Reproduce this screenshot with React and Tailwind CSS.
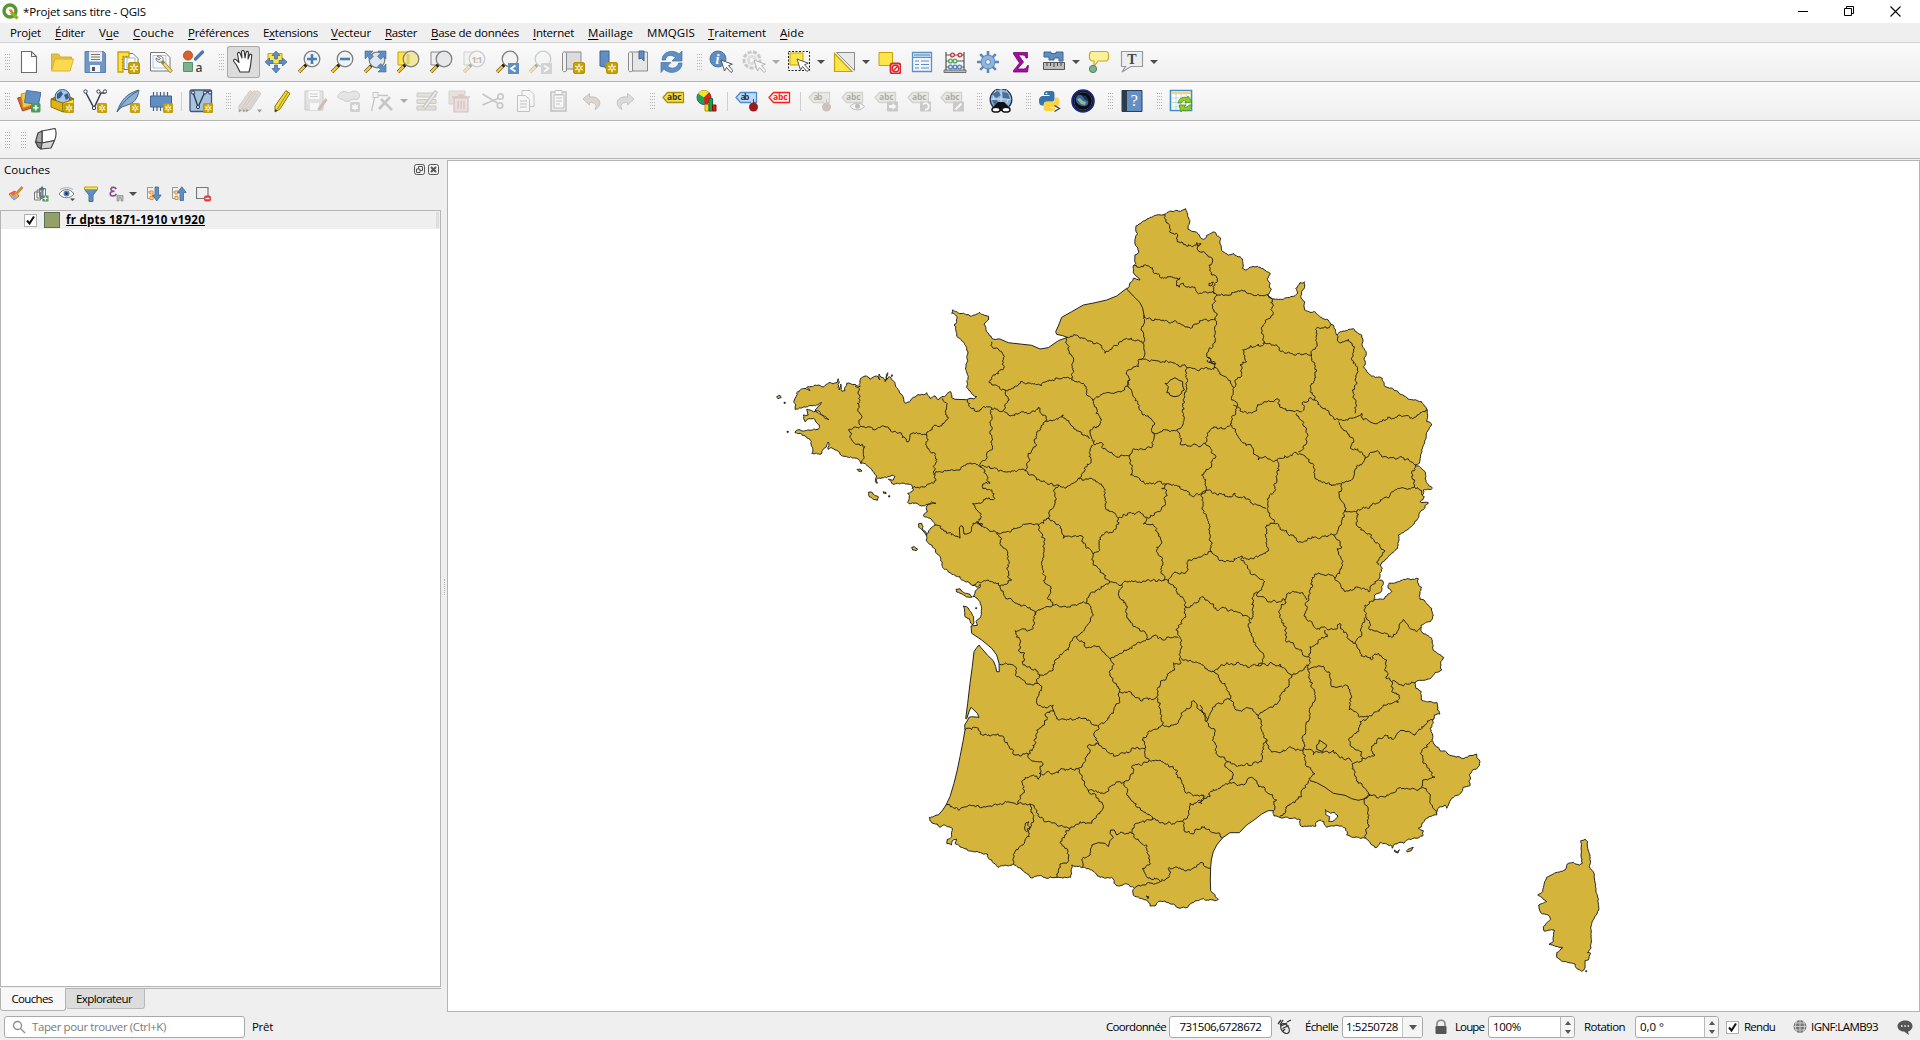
import React, { useLayoutEffect, useRef } from "react";

/* ---------- text fitted to a column width ---------- */
function T({ w, className = "", children }) {
  const ref = useRef(null);
  useLayoutEffect(() => {
    const el = ref.current;
    el.style.letterSpacing = "0px";
    const natural = el.getBoundingClientRect().width;
    el.style.letterSpacing = (w - natural) / el.textContent.length + "px";
  }, [w]);
  return <span ref={ref} className={"inline-block shrink-0 whitespace-nowrap " + className}>{children}</span>;
}

/* ---------- map geometry ---------- */
/* Each letter opens a survey sheet; points are in thirds of a pixel from the sheet's corner.
   A lower-case letter marks a smooth stretch. */
const SHEETS = { A: [760, 350], B: [920, 200], C: [1180, 200], D: [900, 500], E: [1200, 500], F: [1100, 800] };

function parse(src) {
  let sheet = SHEETS.A, smooth = false;
  const pts = [];
  for (const tok of src.trim().split(/\s+/)) {
    if (/^[A-Fa-f]$/.test(tok)) {
      sheet = SHEETS[tok.toUpperCase()];
      smooth = tok !== tok.toUpperCase();
      continue;
    }
    const [x, y] = tok.split(",").map(Number);
    pts.push([sheet[0] + x / 3, sheet[1] + y / 3, smooth]);
  }
  return pts;
}

function roughen(src, amp, closed) {
  const pts = parse(src);
  if (closed) pts.push(pts[0]);
  const out = [pts[0]];
  const noise = (a, b) => {
    const s = Math.sin(a * 12.9898 + b * 78.233) * 43758.5453;
    return (s - Math.floor(s)) * 2 - 1;
  };
  const split = (p, q, level) => {
    const dx = q[0] - p[0], dy = q[1] - p[1], len = Math.hypot(dx, dy);
    if (len < 2.2 || level === 0) { out.push(q); return; }
    const n = noise(p[0] + q[0], p[1] + q[1]) * amp;
    const k = Math.min(1, 5 / len);
    const m = [(p[0] + q[0]) / 2 - dy * n * k, (p[1] + q[1]) / 2 + dx * n * k];
    split(p, m, level - 1);
    split(m, q, level - 1);
  };
  for (let i = 1; i < pts.length; i++) {
    if (pts[i][2]) out.push(pts[i]);
    else split(pts[i - 1], pts[i], 5);
  }
  return "M" + out.map((p) => p[0].toFixed(1) + " " + p[1].toFixed(1)).join("L") + (closed ? "Z" : "");
}

const MAINLAND = `B 660,240 643,222 640,205 647,190 645,165 656,158 650,140 645,118 652,100 648,78 665,66 690,52 730,44 745,36 775,33 797,26
C 17,26 27,58 24,88 45,95 60,110 70,118 80,106 105,97 122,118 128,155 145,166 160,160 180,170 188,185 187,205 195,210 207,203 240,202 258,212 271,222 262,235 270,250 268,262 274,268 262,285 273,294 310,298 345,287 353,280 347,265 360,248 374,245 374,258 365,275 362,290 374,305 374,330 400,335 425,352 440,358 452,373 460,375 467,390 470,405 485,395 520,386 545,405 547,430 558,455 552,478 556,490 550,500 565,520 580,528 607,535 615,560 650,572 680,592 700,600 725,605 740,627 742,640 740,665 755,672 738,715 725,750 718,790 706,795 735,815 738,845 757,865 730,870 727,885 733,890 720,905 745,908 728,930 710,960
E 632,80 595,105 593,145 565,170 540,195 547,205 535,238 550,247 545,272 524,285 522,300 552,297 562,285 575,275 565,265 567,250 580,250 610,238 655,236 653,248 665,262 660,298 672,300 695,325 700,345 690,365 664,375 663,385 672,402 695,415 698,445 715,462 731,472 722,490 725,510 705,518 685,537 650,543 645,550 648,565 664,575 664,600 690,605 710,607 712,630 720,642 703,645 703,655 698,660 690,685 698,705 695,720 705,735 720,752 740,757 785,775 830,762 832,775 840,785 832,805 815,815 807,845 810,857 790,862 782,880 755,895 745,915 740,925 735,915 722,920 712,930 710,945 680,955 665,980 655,985 670,992 668,1008 620,1020 612,1030 600,1027 580,1035 577,1045 572,1035 540,1028 525,1043 510,1028 497,1015 440,1005 437,985 425,978 380,982 372,965 360,960 350,965 348,978 310,980 300,975 300,958 240,952 222,948 220,932
e 205,932 185,942 165,958 140,975 118,998 90,998 68,1013 50,1035 40,1055 34,1080 32,1100 31,1140 32,1172
F 340,280 355,298 343,302 310,295 285,303 267,315 263,322 240,325 220,312 195,303 175,305 165,318 150,318 140,300 100,285 98,275 103,265 80,252 52,257 35,232 0,232
D 575,1110 545,1103 515,1095 512,1132 475,1132 450,1130 445,1135 425,1127 390,1132 370,1112 340,1092 325,1098 315,1095 297,1102 265,1075 262,1062 220,1055 165,1030 170,1018 160,1020 155,1035 140,1030 142,1018 155,1010 157,985 130,975 120,982 112,972 95,968 88,952 115,945
d 128,930 138,915 150,890 162,850 172,810 180,770 190,720 195,690 194,675 203,660 207,652 215,650 237,652 232,640 213,622 207,635 200,656 197,656 203,610 210,550 217,500 222,455 229,445 237,435 242,442 262,465 280,482 287,500 290,515 298,515 297,490 290,465 275,445 245,420 215,400 213,378 232,376
D 228,365 242,350 245,325 240,305 232,295 218,290 225,280 240,262 240,253 230,262 215,255 205,245 185,240 180,230 150,218 128,203 122,175 95,135 78,120 78,105 105,75
A 515,510 490,497 502,485 500,468 528,460 515,455 485,468 462,460 443,457 448,445 443,430 460,420 455,405 440,402 425,400 400,403 385,388 400,390 405,380 395,375 380,383 352,385 352,400 346,395 350,378 340,365 320,345 302,340 290,325 265,322 240,312 225,300 212,293 204,298 204,276 198,292 190,298 183,312 155,310 158,295 150,268 135,258 105,248 107,243 160,238 175,238 178,225 160,205 142,208 135,215 130,195 145,195 140,178 160,185 172,186 185,195 207,209 180,186 165,181 185,158 160,167 105,178 103,150 110,128 135,115 150,122 140,112 175,105 185,110 215,100 232,97 235,86 238,120 242,102 246,124 255,122 260,100 285,103 300,110 302,85 315,78 330,88 350,78 360,90 358,72 376,92 383,68 375,95 388,80 405,100 420,130 438,160 460,142 480,135 500,128 510,145 525,138 535,150 545,140 572,125 575,143
a 585,148 620,149 630,145
A 642,147 650,140 640,135 620,112 625,80 618,50 620,0
B 128,425 110,405 102,375 110,365 107,345 95,340 97,330 150,348 180,338 205,348 205,360 192,372 200,395 215,415 240,417
b 265,428 300,432 335,436 360,447 385,443 415,422 442,412 428,407 410,403 407,395 415,378 425,352 455,335 490,315 525,308 560,300 590,288 620,265
B 635,245 640,235`;

const CORSICA = `F 1442,122 1455,118 1463,125 1463,145 1470,165 1468,200 1482,220 1488,265 1495,295 1496,330 1475,370 1473,430 1473,445 1462,458 1472,460 1465,480 1455,482 1455,505 1445,514 1430,505 1425,492 1390,485 1370,472 1370,458 1388,443 1347,433 1360,425 1363,390 1332,393 1330,380 1352,358 1345,345 1322,338 1316,315 1340,305 1325,292 1313,285 1328,275 1333,250 1340,232 1360,222 1395,210 1402,192 1420,187 1438,195 1447,190 1443,165`;

const ISLANDS = [
  "A 50,140 60,136 64,142 54,146", "A 291,358 300,357 306,363 297,364", "A 325,427 335,426 345,437 355,440 352,451 340,448 328,440",
  "A 72,157 76,157 76,160 72,160", "A 81,244 85,244 85,247 81,247", "A 370,425 378,427 378,431 371,430", "A 386,437 389,437 389,441 386,441",
  "A 475,522 485,520 489,530 487,537 497,545 501,556 492,545 482,536 476,532", "A 455,592 463,590 473,598 468,602 458,600",
  "A 588,718 600,716 605,724 630,733 635,742 620,741 600,730 590,726", "A 610,768 620,770 632,785 641,800 641,822 636,824 628,806 615,800",
  "A 647,773 650,773 650,776 647,776", "A 395,74 398,76 395,80", "E 583,1050 592,1056 598,1049 594,1059 584,1055", "E 620,1052 640,1042 634,1052 622,1056",
  "F 1457,512 1460,512 1460,515 1457,515",
];

const LAGOONS = ["E 376,929 392,940 403,937 414,948 398,964 386,964 389,950 377,944"];

const BORDERS = [
  "B 730,44 748,95 770,100 768,115 790,133 835,137 843,130 830,128 832,145 862,165 878,182 868,195 872,215 890,230 885,280",
  "B 640,197 670,200 690,202 730,235 780,233 770,248 778,262 790,250 825,262 830,275 885,280",
  "B 885,280 892,285 C 115,285 155,278 195,272 235,282 273,294", "b 620,267 640,288 660,308 668,325 672,345", "B 672,345 685,355 740,362 770,365 812,385 850,360 885,357",
  "B 892,285 878,320 885,357 885,420 865,455 865,475 885,495 885,502", "B 864,472 872,478 868,486 882,484 888,492 874,490 862,480",
  "B 672,345 665,380 668,430 675,462 660,478", "B 660,478 690,485 740,482 800,502 840,510 885,502",
  "B 442,412 470,405 500,420 535,430 555,460 575,448 600,425 620,415 668,430", "B 442,412 445,450 458,490 455,540",
  "B 215,425 220,445 250,465 253,500 225,525 208,548 255,570", "B 255,570 310,548 365,558 405,535 455,533",
  "B 455,540 490,550 518,600 530,590 585,578 608,572 630,540 620,515 655,500 660,478", "B 255,570 268,600 250,632",
  "B 143,600 150,622 168,635 190,620 215,628 250,632", "B 250,632 265,645 310,635 345,635 355,622 378,655 380,665 430,645 450,670 480,695 510,715",
  "B 518,600 528,640 540,655 535,680 510,690 515,715 525,735", "B 215,628 215,690 215,750 200,760 180,800",
  "B 378,660 360,685 345,730 325,760 330,780 315,812", "B 180,800 230,805 265,815 315,812", "B 315,812 345,830 380,850 415,855 440,860 475,835",
  "B 520,735 510,790 475,835", "B 525,735 550,732 545,742 555,745 595,772 630,765", "B 630,540 640,590 665,635 700,665 700,700 690,742 650,748 630,765",
  "B 800,502 798,560 788,620 788,675 770,690", "B 700,697 740,690 770,690 785,735 830,735 855,730",
  "b 735,550 742,551 750,541 765,533 776,540 788,545 788,558 793,570 785,574 785,580 775,588 762,590 750,586 747,578 740,578 743,570 745,560 735,550",
  "B 885,502 940,562 935,590 950,620 935,650 932,675",
  "B 855,730 875,685 932,675", "B 630,765 632,825 660,840 680,850 740,852", "B 740,852 790,870 815,888 850,880", "B 855,730 885,765 875,795 845,825 857,872 850,880",
  "B 475,835 520,840 550,860 555,920 595,955 650,938 685,955 720,935 735,900 740,870 725,865 740,852",
  "A 660,350 690,400 668,402 668,415 695,420 705,445 638,460 662,490 655,515", "A 895,405 885,460 865,505", "A 520,373 600,360 630,338 658,350",
  "A 500,255 505,270 497,285 525,310 530,335 520,350 520,400 485,410 455,415", "A 285,108 300,140 292,160 300,225", "A 300,228 345,240 375,230 425,255 440,275 460,248 500,255",
  "A 300,230 265,240 275,270 315,290 310,310 302,340", "A 545,145 560,170 552,220 520,230 500,255", "A 525,525 560,550 600,565 a 598,532 603,527 609,530 612,552 620,552 630,548 A 635,530 650,515 680,535 710,548",
  "A 650,515 668,522 665,530 652,518", "A 710,548 770,535 790,523 835,527 860,505", "A 710,548 740,600 748,640 742,680 755,690 720,708", "A 640,705 690,695 720,708",
  "A 720,708 735,740 800,770 828,795", "A 835,527 855,570 850,610 845,640 855,700 875,715 862,745 878,765", "D 440,57 485,90 490,115 540,105 550,130 580,163",
  "D 580,163 595,155 605,105 640,95 657,68 655,55", "D 740,55 730,72 765,80 785,125 770,150 785,180 790,243", "D 580,163 580,195 610,220 628,248",
  "D 458,315 500,322 520,315 560,310", "D 560,310 570,285 628,250", "D 628,248 665,255 680,245 740,240 805,243", "D 665,255 658,290 670,300 682,355 700,380 735,395 740,418",
  "D 560,310 580,345 555,385 530,410", "D 458,315 420,330 405,345 400,385 345,392 360,430 355,450 375,460 370,495 400,510 420,525",
  "D 530,410 510,430 505,450 465,480 460,510 440,522 420,525", "D 298,492 345,500 350,530 390,552 410,550 420,525", "D 410,550 425,565 410,608 425,620 460,615 462,635",
  "D 462,635 435,645 440,660 410,690 400,745 385,765", "D 195,690 235,685 240,702 300,708 340,750 345,765 385,762", "D 385,762 388,775 428,790 418,820",
  "D 462,635 475,660 530,655 555,655 595,680", "D 595,680 640,640 658,600 658,577", "D 530,410 555,440 590,440 632,475", "D 632,475 665,460 740,418",
  "D 632,475 640,490 628,515 655,560 658,577", "D 658,577 690,575 720,600 770,592", "D 740,418 765,405 790,420 835,412", "D 805,243 850,295 858,320 858,350 828,388 840,412",
  "D 840,412 843,470 840,492 820,488", "D 820,488 815,515 790,540 775,585 770,592 782,630 788,675", "D 843,475 870,480 900,490 935,515 E 35,515",
  "D 788,675 730,712 735,745", "D 788,675 835,668 860,625 882,602 920,665", "D 595,732 640,768 680,755 735,745",
  "D 595,680 585,695 597,732", "D 597,732 565,735 570,755 550,790 535,805", "D 418,820 450,818 510,805 535,805", "D 535,805 545,825 558,862 565,872",
  "D 565,872 620,875 640,855 672,845", "D 672,845 700,815 695,800 745,785", "D 735,745 735,770 745,785", "D 745,785 780,780 820,800 845,840 860,880 880,888 915,890",
  "D 672,845 700,905 755,960", "D 915,895 930,890 940,868 E 40,868 90,848", "D 915,895 870,910 862,955 848,965", "D 755,960 790,968 848,965",
  "D 848,965 852,990 880,1002 905,980 960,1005 E 68,1013", "D 418,820 415,838 400,825 370,840 368,880 355,912", "D 565,872 610,920 575,970 540,965 510,985",
  "D 390,912 430,960 470,975 510,985", "D 138,915 180,928 200,920 270,918 355,912 390,912", "D 390,912 402,960 388,1010 340,1075 340,1092", "D 378,968 386,965 390,985 380,995 374,985 378,968",
  "D 510,985 480,1028 507,1065 500,1090 480,1092 475,1132", "D 545,1100 545,1080 570,1060 575,1035 d 595,1028 615,1030 625,1040 630,1022 640,1012 630,1000 632,990 643,990 650,1005 D 668,998 695,1000",
  "D 695,1000 710,970 755,960", "D 695,1000 720,1025 740,1035 748,1095 728,1105 740,1130 780,1143", "D 703,1165 740,1150 780,1145 808,1130 808,1102 880,1105 900,1088 932,1102",
  "D 738,1188 746,1190 744,1196 738,1188", "B 874,248 880,246 876,256 866,256 874,248",
  "C 65,880 70,905 C 70,930 90,980 95,1055", "D 805,243 830,218 858,215 865,180 935,155", "D 935,155 E 60,182 100,185 125,168", "D 858,320 905,290 915,300 E 15,300 50,330 110,335 150,355",
  "E 125,168 150,215 188,238 185,270 160,290 160,350 150,355", "E 125,168 155,175 200,155 200,125 200,75 222,70", "C 65,880 85,870 115,885 150,890 165,880 210,905 258,925",
  "C 262,925 270,940 E 222,68", "C 292,785 298,810 285,850 265,905 262,925", "C 155,675 185,725 215,740 235,780 292,782", "C 160,615 190,637 215,640 230,622 255,605 295,597 300,622 320,633 345,635 365,635",
  "C 350,640 380,685 380,730 355,755", "C 292,782 340,760 370,765", "C 370,765 400,800 405,835 455,858 485,850", "C 395,465 405,525 390,575 403,600 370,605 368,632",
  "C 160,562 185,520 180,495 200,485 188,450 235,432 248,437", "C 248,437 250,375 278,345 273,294", "C 248,430 270,430 310,455 395,465", "C 395,465 412,435 412,382 440,385 452,375",
  "C 470,405 475,425 505,418 520,450 520,490 532,510 520,580 525,640", "C 403,600 440,630 475,660", "C 475,660 545,640 550,660 580,670 620,658 660,645 690,655 742,630",
  "C 475,665 520,715 512,740 555,775", "C 555,775 585,755 625,775 665,770 706,795", "C 555,775 525,810 520,835 485,845", "C 706,795 695,820 703,862",
  "C 703,862 640,875 590,910 530,937 495,930", "C 485,850 478,885 495,930 E 425,70 400,105", "C 703,862 720,870 727,885", "E 222,70 250,90 300,125 400,105",
  "E 470,38 482,90 515,105 552,150 535,195", "E 400,105 425,140 412,145 425,190 420,220 405,235", "E 405,235 435,275 465,262 505,275 535,240", "E 405,235 385,222 345,222",
  "E 345,222 330,270 320,305", "E 175,275 175,290 200,300 255,300 265,278 300,280 320,300", "E 255,300 238,340 252,370 258,425 305,450 308,465 325,470",
  "E 320,305 318,355 350,388 380,385", "E 375,390 382,410 330,440 325,470", "E 380,388 400,390 420,370 465,430", "E 465,430 485,400 498,350 495,315 522,300",
  "E 500,352 510,390 545,400 575,412 590,400 610,358 625,375 650,395 663,382", "E 465,430 490,470 515,480 525,462 560,480 558,530 575,545", "E 575,545 610,558 645,548",
  "E 575,545 575,575 597,590 595,607 550,615 505,650", "E 325,510 365,500 390,520 395,560 445,562 447,630 505,650", "E 150,355 145,380 160,420 190,460 188,485 175,497",
  "E 35,515 80,488 130,497 175,497", "E 175,497 240,492 258,510 275,525", "E 275,525 325,497 325,470", "E 325,497 345,600 330,640 318,690 310,750", "E 275,525 240,600 175,645",
  "E 35,515 75,550 88,597", "D 920,665 E 30,640 50,612 88,597", "E 0,615 15,640 20,665", "E 88,597 108,630 150,625 175,645", "E 175,645 195,715", "E 22,668 45,690 48,760 85,785",
  "E 85,785 130,797 185,785 190,730 200,718", "E 195,715 208,748 245,755 265,743 310,750", "E 85,785 75,800 100,825 90,848 120,855 155,832 170,850",
  "E 170,850 230,900 220,932", "D 905,885 912,895 905,912 895,908", "E 310,750 325,800 345,822 310,865 305,890 275,910 240,950", "e 330,842 350,848 375,862 400,880 435,886 455,896 475,901 495,896 510,885",
  "E 310,745 335,750 340,765 400,750 455,785", "e 350,735 357,730 358,720 380,735 378,742 370,748 368,755 350,748 350,735", "E 505,650 480,665 475,695 447,715 450,735 485,755 487,780 457,790",
  "E 487,775 525,765 515,745 530,730 555,705 580,718 600,692 645,705 665,680 703,655", "E 457,790 475,850 510,885", "E 510,885 550,890 590,868 620,865 668,862",
  "E 695,722 665,755 670,790 705,832 668,840 662,862", "E 668,862 690,895 705,930 710,940", "E 510,885 492,900 507,975 497,1015",
];

const LAND_PATH = roughen(MAINLAND, 0.2, true);
const CORSICA_PATH = roughen(CORSICA, 0.12, true);
const ISLAND_PATH = ISLANDS.map((d) => roughen(d, 0.1, true)).join("");
const LAGOON_PATH = LAGOONS.map((d) => roughen(d, 0.1, true)).join("");
const BORDER_PATH = BORDERS.map((d) => roughen(d, 0.36, false)).join("");

function FranceMap() {
  return (
    <svg className="block" width="1471" height="850" viewBox="448 161 1471 850" strokeLinejoin="round" stroke="#232323" strokeWidth="1">
      <g fill="#d5b43c">
        <path d={LAND_PATH} />
        <path d={CORSICA_PATH} />
        <path d={ISLAND_PATH} />
      </g>
      <path d={LAGOON_PATH} fill="#fff" />
      <path d={BORDER_PATH} fill="none" />
    </svg>
  );
}

/* ---------- icon pieces ---------- */
const Star = ({ x = 12, y = 12, s = 1 }) => (
  <g transform={`translate(${x} ${y}) scale(${s})`}>
    <rect x="0.5" y="0.5" width="11" height="11" rx="1.5" fill="#c9a100" stroke="#b99300" />
    <path d="M6 1.800v8.400M2.300 4l7.400 4M9.700 4L2.300 8" stroke="#fff" strokeWidth="1.300" />
    <circle cx="6" cy="6" r="1.100" fill="#c9a100" />
  </g>
);
const Plus = ({ x = 14, y = 14 }) => (
  <g transform={`translate(${x} ${y})`}>
    <rect x="0" y="0" width="9.500" height="9.500" rx="1.500" fill="#4c9a61" />
    <path d="M4.750 2v5.500M2 4.750h5.500" stroke="#fff" strokeWidth="1.700" />
  </g>
);
const Mag = ({ fill = "#f2f4f4", cx = 15, cy = 9, children }) => (
  <g>
    <path d="M9.500 14.500L2 22" stroke="#6b5a20" strokeWidth="3.400" />
    <path d="M8 16L2 22" stroke="#fcc63a" strokeWidth="2.200" />
    <path d="M7.500 16.500l3-3" stroke="#222" strokeWidth="3" />
    <circle cx={cx} cy={cy} r="7.800" fill={fill} stroke="#7d7f80" strokeWidth="1.300" />
    {children}
  </g>
);
const Cursor = ({ x = 12, y = 10 }) => (
  <path transform={`translate(${x} ${y})`} d="M0 0l3.500 11 2-3.500 4.500 5 2-1.800-4.500-5 3.800-1.500z" fill="#fff" stroke="#555" strokeWidth="1" />
);
const Tag = ({ fill, stroke, text, color = "#333" }) => (
  <g>
    <path d="M1 8.500L5.500 3.500H21.500V13.500H5.500z" fill={fill} stroke={stroke} strokeWidth="1.300" strokeLinejoin="round" />
    <text x={text === "ab" ? 5.5 : 5} y="11.200" fontSize="8.500" fontWeight="700" fill={color} fontFamily="Open Sans" textLength={text === "ab" ? 9 : 14.5}>{text}</text>
  </g>
);
const Pin = ({ c = "#9c1c1c" }) => (
  <g><path d="M17.500 8v9" stroke="#c8d4e0" strokeWidth="3" /><path d="M18.500 10v7" stroke={c} strokeWidth="1" /><circle cx="18.500" cy="18" r="4.500" fill={c} /></g>
);
const Pencil = ({ x = 0, fill = "#f3d83a", dark = "#8a7410" }) => (
  <g transform={`translate(${x} 0)`}><path d="M16 1.500l4 3L10 20l-5 3 0-6z" fill={fill} stroke={dark} /><path d="M18 3L7.500 20" stroke={dark} strokeWidth=".8" /><path d="M5 23l.3-3 2.300 1.600z" fill="#333" /></g>
);
const arrows4 = "M12 1l4 4.500h-2.500V9h-3V5.500H8zM12 23l4-4.500h-2.500V15h-3v3.500H8zM1 12l4.500-4v2.500H9v3H5.500V16zM23 12l-4.500-4v2.500H15v3h3.500V16z";

const ICONS = {
  new: <path d="M4.500 1.500h10l5 5v16h-15zM14.500 1.500v5h5" fill="#fff" stroke="#6b6b6b" strokeWidth="1.100" />,
  open: <g><path d="M1.500 20V4h7l2 3h11v3" fill="#e5bf3e" stroke="#d9ad2b" /><path d="M1.500 21L5 9h18.500l-3.500 12z" fill="#fcd94f" stroke="#dcb236" /></g>,
  save: <g><path d="M2 1.500h18.500l2 2v19H2z" fill="#6d97c4" stroke="#5b7fa8" /><path d="M6 1.500h13v10H6z" fill="#efefef" /><path d="M8 4.500h9M8 7h9M8 9.500h9" stroke="#777" /><path d="M7 15h10v7H7z" fill="#f4f4f4" /><path d="M9 17h3v4H9z" fill="#555" /></g>,
  layout: <g><path d="M8 3.500h9l5 5v11H8z" fill="#fff" stroke="#777" /><path d="M11 8h8v10h-8z" fill="#fff" stroke="#9bb9de" /><path d="M2 2h11v5H7v15H2z" fill="#fbe04e" stroke="#c9a100" strokeWidth="1.300" /><path d="M6.500 9v12M7 6.500h5" stroke="#b08e00" strokeDasharray="1 2" strokeWidth="1.500" /><Star /></g>,
  manager: <g><path d="M1.500 2.500H16l5 5V21H1.500z" fill="#fff" stroke="#777" /><path d="M4 5.500h13V18H4z" fill="#f5f9fd" stroke="#aec6e3" /><path d="M8 6c4-1 7 1 6 5l-2 1c-3 1-5-1-5-4l3 2 1.500-1.500z" fill="#f2f2f2" stroke="#777" /><path d="M13 11.500L22.500 22" stroke="#a28436" strokeWidth="3.600" /><path d="M15 13.500l7 8" stroke="#f4da7a" strokeWidth="2" /></g>,
  style: <g><circle cx="6" cy="5.500" r="4.500" fill="#d9632f" stroke="#b04a1d" /><path d="M13.500 9l7-7" stroke="#4b78a8" strokeWidth="3.200" strokeLinecap="round" /><path d="M1.500 12.500h9v9h-9z" fill="#7db48a" stroke="#5a9069" /><text x="13.500" y="21.500" fontSize="12" fontFamily="Open Sans" fill="#444" fontWeight="600">a</text></g>,
  hand: <path d="M8 22l-3.500-7-3-4c0-2 2-2.300 3-1l2.500 2.500L5.500 4c0-2 2.200-2.200 2.700-.5L10 8 9.500 2c0-2 2.500-2 2.800 0L13 8l1-5.500c.4-1.700 2.500-1.500 2.400.3L16 9l1.500-4c.6-1.400 2.400-.9 2.200.6L18.500 16 17 22z" transform="translate(1 0)" fill="#fff" stroke="#333" strokeWidth="1.100" strokeLinejoin="round" />,
  pan: <g><path d="M4 3.500h14v10H4z" fill="#fbe54b" stroke="#c9a100" /><path d={arrows4} fill="#5f8ec2" stroke="#3d658f" strokeWidth=".7" /></g>,
  zoomin: <Mag><path d="M15 4v10M10 9h10" stroke="#4b7db3" strokeWidth="2.600" /></Mag>,
  zoomout: <Mag><path d="M10 9h10" stroke="#4b7db3" strokeWidth="2.600" /></Mag>,
  full: <Mag cx={14} cy={10} fill="#dfe6ec"><path d="M2 1h8L7.600 3.400 10.500 6.300 7.300 9.500 4.400 6.600 2 9zM23 1h-8l2.400 2.400-2.900 2.900 3.200 3.200 2.900-2.900L23 9zM23 22h-8l2.400-2.400-2.900-2.900 3.200-3.200 2.900 2.900L23 14z" fill="#5f8ec2" stroke="#43689a" strokeWidth=".6" /></Mag>,
  zoomsel: <g><path d="M2 2h11v13H2z" fill="#fbe54b" stroke="#c9a100" /><Mag fill="#f0e7a0"><path d="M12 4v10" stroke="#e0cd60" strokeWidth="3" /></Mag></g>,
  zoomlay: <g><path d="M2 2h11v13H2z" fill="#eee" stroke="#8a8a8a" /><Mag fill="#e6e8e9" /></g>,
  native: <g opacity=".35"><path d="M2 2h11v13H2z" fill="#eee" stroke="#8a8a8a" /><Mag><text x="9.500" y="12.500" fontSize="9" fontWeight="700" fontFamily="Open Sans" fill="#444" textLength="11">1:1</text></Mag></g>,
  last: <g><Mag /><path d="M13 13h11v11H13z" fill="#5f8ec2" /><path d="M20.500 15.500l-4.500 3 4.500 3" stroke="#fff" strokeWidth="1.900" fill="none" /></g>,
  next: <g opacity=".35"><Mag /><path d="M13 13h11v11H13z" fill="#999" /><path d="M16 15.500l4.500 3-4.500 3" stroke="#fff" strokeWidth="1.900" fill="none" /></g>,
  newview: <g><path d="M4.500 2H20v17H4.500z" fill="#dcdcdc" stroke="#8b8b8b" /><path d="M1.500 4c0-3 4-3 4 0v17c-4 2-4-1-4-1z" fill="#f1f1f1" stroke="#8b8b8b" /><Star /></g>,
  bookmark: <g><path d="M6 1h9v20l-4.500-4L6 16z" fill="#5f8ec2" stroke="#3f658f" /><Star /></g>,
  bookmarks: <g><path d="M4.500 2H20.500v19H4.500z" fill="#e6e6e6" stroke="#8b8b8b" /><path d="M1.500 4c0-3 4-3 4 0v17c-4 2-4-1-4-1z" fill="#f1f1f1" stroke="#8b8b8b" /><path d="M12 1h5v10l-2.500-3L12 9z" fill="#5f8ec2" stroke="#3f658f" /></g>,
  refresh: <g fill="#5f8ec2" stroke="#4573a8" strokeWidth=".7"><path d="M2 10C2 1 14-1 19 4l3-3v10H12l3.500-3.500C11 4 6 5 5.500 10z" /><path d="M22 13c0 10-13 12-18 6l-3 3.500V12.500h10L7.500 16c4 4 10 2 11-3z" /></g>,
  identify: <g><circle cx="9" cy="9" r="8" fill="#5f8ec2" stroke="#4876a8" /><text x="6.500" y="14" fontSize="14" fontStyle="italic" fontWeight="700" fontFamily="Liberation Serif" fill="#fff">i</text><Cursor /></g>,
  action: <g opacity=".4"><circle cx="10" cy="10" r="8" fill="#eee" stroke="#888" strokeWidth="3" strokeDasharray="4 1.500" /><circle cx="10" cy="10" r="5" fill="#bbb" /><path d="M8.500 7.500l4.500 2.500-4.500 2.500z" fill="#fff" /><Cursor /></g>,
  select: <g><path d="M1.500 1.500h21v19h-21z" fill="none" stroke="#222" strokeDasharray="2 1.500" /><path d="M3 3h13v12H3z" fill="#fbe54b" stroke="#c9a100" /><Cursor x={10} y={9} /></g>,
  selval: <g><path d="M4.500 2.500h18v18z" fill="#e9e9e9" stroke="#8b8b8b" /><path d="M2.500 3.500L20 21.500H2.500z" fill="#fbe54b" stroke="#c9a100" strokeWidth="1.200" /></g>,
  deselect: <g><path d="M2 2.500h13.500v13H2z" fill="#fbe54b" stroke="#c9a100" /><rect x="13.500" y="13.500" width="10" height="10" rx="2" fill="#fff" stroke="#d8262c" strokeWidth="1.800" /><circle cx="18.500" cy="18.500" r="3.300" fill="#fff" stroke="#d8262c" strokeWidth="1.600" /><path d="M16.500 20.500l4-4" stroke="#d8262c" strokeWidth="1.600" /></g>,
  table: <g><path d="M2.500 2.500h19v19h-19z" fill="#f0f5fb" stroke="#5f8ec2" strokeWidth="1.300" /><path d="M3 3h18v4.500H3z" fill="#bcd6ee" /><path d="M2.500 7.500h19M5 11h4M5 14.500h4M5 18h4M11 11h8M11 14.500h8M11 18h8M4 5h16" stroke="#5f8ec2" strokeWidth="1.200" /></g>,
  abacus: <g fill="none" strokeWidth="1.300"><path d="M3 2v19M21 2v19M1.500 21.500h21M3 5h18M3 11h18M3 17h18" stroke="#555" strokeWidth="1.200" /><path d="M1 20h22v2.500H1z" fill="#bbb" stroke="#555" strokeWidth=".8" /><g fill="#f4d6d6" stroke="#c23b3b"><circle cx="9.500" cy="5" r="1.900" /><circle cx="17" cy="5" r="1.900" /></g><g fill="#d8f0d8" stroke="#55a55c"><circle cx="7.500" cy="11" r="1.900" /><circle cx="12" cy="11" r="1.900" /></g><g fill="#d8e6f5" stroke="#4f81bd"><circle cx="7.500" cy="17" r="1.900" /><circle cx="12" cy="17" r="1.900" /><circle cx="16.500" cy="17" r="1.900" /></g></g>,
  gear: <g><g stroke="#5a86b8" strokeWidth="2.600"><path d="M12 1v22M1 12h22M4.200 4.200l15.600 15.600M19.800 4.200L4.200 19.800" /></g><circle cx="12" cy="12" r="7" fill="#8fb4de" stroke="#5a86b8" strokeWidth="1" /><circle cx="12" cy="12" r="2.400" fill="#f3f3f3" stroke="#5a86b8" /></g>,
  sigma: <path d="M4.500 2.500h14V8H17c-.5-2-1.500-3-3.500-3H9.500l5 7-6 7h6c2 0 3-1 4-3.500H19.500L18.500 22H4.500v-1.500L10.500 13 4.500 4z" fill="#a90aa3" stroke="#6d0a6a" strokeWidth=".8" />,
  measure: <g><path d="M2 2h7v1.500h5V2h7v9h-4V8h-5v2H7V7H2z" fill="#5f8ec2" stroke="#3f658f" /><path d="M1.500 12.500h21v7h-21z" fill="#bdbdbd" stroke="#555" /><path d="M5 13v3M8.500 13v3M12 13v4M15.500 13v3M19 13v3" stroke="#444" /></g>,
  tip: <g><path d="M5 1.500h14c3.500 0 3.500 9.500 0 9.500h-8l-4 5.500V11H5c-3.500 0-3.500-9.500 0-9.500z" fill="#fcf09a" stroke="#c9a735" strokeWidth="1.200" /><circle cx="6" cy="19" r="3.600" fill="#7db48a" stroke="#4f7d5b" /></g>,
  text: <g><path d="M1.500 1.500h21v15H11l-9 5.500 3.500-5.500h-4z" fill="#eaeff2" stroke="#9a9a9a" strokeWidth="1.200" /><text x="7.300" y="13.500" fontSize="14" fontWeight="700" fontFamily="Liberation Serif" fill="#444">T</text></g>,

  dsm: <g><path d="M0.500 9l9-2 5 12-9 3z" fill="#d9632f" stroke="#a94e22" /><path d="M4 5l9-2 2 13-9 3z" fill="#f2cb42" stroke="#c59d1f" /><path d="M9.500 1.500L24 3.500 21.500 15.500 7.500 13.500z" fill="#6390c4" stroke="#47719f" /><Plus /></g>,
  geopkg: <g><path d="M1 10l7-3h10l6 3-11 5z" fill="#a98600" stroke="#8b6d00" /><circle cx="12.500" cy="8" r="7.500" fill="#a8c6e8" stroke="#355c89" /><path d="M7 5l4-3 2 3-3 4-3 1zM14 6l4-2 1 5-3 2z" fill="#355c89" /><path d="M1 10l12 4v9L1 18z" fill="#e1b312" stroke="#8b6d00" /><path d="M13 14L24 10v8l-11 5z" fill="#fbe54b" stroke="#8b6d00" /><Star s={0.85} x={14} y={14} /></g>,
  vlayer: <g><path d="M3 4l8 15 7-15h4" fill="none" stroke="#333f4b" strokeWidth="1.500" /><g fill="#fff" stroke="#333f4b"><circle cx="2.500" cy="2.500" r="1.700" /><circle cx="11" cy="19" r="1.700" /><circle cx="15.500" cy="2.500" r="1.700" /><circle cx="22" cy="2.500" r="1.700" /></g><Star s={0.85} x={14} y={14} /></g>,
  feather: <g><path d="M1 23C5 11 11 4 23 1c-1 7-4 12-9 14l-8 3c-2 1-3 3-5 5z" fill="#8fb0d4" stroke="#43668c" /><path d="M1 23C7 13 13 7 22 2" stroke="#43668c" fill="none" /><Star s={0.85} x={14} y={14} /></g>,
  memory: <g><path d="M4.500 3v19M8 3v19M11.500 3v19M15 3v19M18.500 3v19" stroke="#45607c" strokeWidth="1.200" /><path d="M1.500 7h21v11h-21z" fill="#5f8ec2" stroke="#3f658f" /><Star s={0.85} x={14} y={14} /></g>,
  virtual: <g><rect x="1" y="1" width="21.500" height="21.500" rx="1.500" fill="#a9c3de" stroke="#3c5a7a" strokeWidth="1.300" /><path d="M4 3l5 15 7-15h5" fill="none" stroke="#25394e" strokeWidth="1.300" /><g fill="#dce9f6" stroke="#25394e"><circle cx="4" cy="3.500" r="1.600" /><circle cx="9" cy="18" r="1.600" /><circle cx="16" cy="3.500" r="1.600" /><circle cx="21" cy="3.500" r="1.600" /></g><Star s={0.85} x={14} y={14} /></g>,
  pencils: <g><g opacity=".45"><Pencil x={-4} fill="#c4b6ad" dark="#a69a94" /><Pencil x={0} fill="#c4b6ad" dark="#a69a94" /><Pencil x={3} fill="#c4b6ad" dark="#a69a94" /></g><path d="M19 20.500h5L21.500 23.500z" fill="#999" /></g>,
  pencil: <Pencil x={-1} />,
  saveedit: <g opacity=".32"><path d="M1 2h18v19H1z" fill="#bbb" stroke="#777" /><path d="M4.500 2h11v8h-11zM6 14h9v7H6z" fill="#fff" /><path d="M6 5h8M6 7.500h8" stroke="#777" /><path d="M22.500 10l-8 11" stroke="#8a4a30" strokeWidth="3" /></g>,
  addpoly: <g opacity=".38"><path d="M3 4c4-4 7 1 11-1 6-3 10 2 8 6-2 3-6 0-8 2-5 4-8-1-10-1C-1 9 1 6 3 4z" fill="#c9cbc4" stroke="#888" /><rect x="13" y="13" width="10" height="10" fill="#999" rx="1.500" /><path d="M18 15v6M15 16.500l6 3M21 16.500l-6 3" stroke="#fff" strokeWidth="1.400" /></g>,
  vertex: <g opacity=".36" fill="none" stroke="#777"><path d="M1.500 22L5 6.500h13" strokeWidth="1.300" /><rect x="3" y="3.500" width="5" height="5" fill="#eee" /><path d="M20 8L9 20M11 10l11 11" strokeWidth="2.600" /></g>,
  multi: <g opacity=".38"><path d="M2 4h19v4H2zM2 10.500h19v4H2zM2 17h19v4H2z" fill="#c9c29c" stroke="#888" /><path d="M21.500 2L9 19" stroke="#777" strokeWidth="4" /><path d="M21 3L9.500 18.500" stroke="#ddd" strokeWidth="2" /></g>,
  trash: <g opacity=".34"><path d="M1 2h16v13H1z" fill="#cbbcb4" stroke="#a08c85" /><path d="M6 9h14v14H6z" fill="#dcb4b4" stroke="#a06868" strokeWidth="1.200" /><path d="M4 8h18M10 12v8M13 12v8M16 12v8M10 6h6" stroke="#a06868" strokeWidth="1.300" /></g>,
  cut: <g opacity=".36" fill="none" stroke="#777" strokeWidth="1.600"><path d="M1.500 5l15 9M1.500 16L18 9" /><circle cx="19.500" cy="7.500" r="2.700" /><circle cx="19" cy="16.500" r="2.700" /></g>,
  copy: <g opacity=".42" fill="#fafafa" stroke="#7f7f7f"><path d="M8 1.500h8l4 4v12H8z" /><path d="M3.500 6.500h8l4 4v12h-12z" /><path d="M6 12h7M6 15h7M6 18h7" /></g>,
  paste: <g opacity=".42" fill="#fafafa" stroke="#7f7f7f"><path d="M4 3h15v19H4z" fill="#e4ddda" strokeWidth="1.500" /><path d="M7 6h10v13H7zM8 1.500h7v4H8z" /><path d="M9 9h6M9 12h6M9 15h4" /></g>,
  undo: <path d="M3 10L9.500 4.500v3.500C21 6.500 23 17 15 20.500c2.500-4 .5-7.500-5.500-7V16z" fill="#ddd6d0" stroke="#c9c0b8" />,
  redo: <path d="M21 10L14.500 4.500v3.500C3 6.500 1 17 9 20.500c-2.500-4-.5-7.500 5.500-7V16z" fill="#d9dcda" stroke="#c2c7c4" />,
  label: <Tag fill="#f7df3c" stroke="#a58f12" text="abc" />,
  diagram: <g><circle cx="9" cy="8.500" r="7" fill="#1aa260" stroke="#555" /><path d="M9 8.500L3 4.500A7 7 0 0 1 14 3.500z" fill="#f9e11e" /><path d="M9 8.500l5-5A7 7 0 0 1 9.500 15.500z" fill="#d81e1e" /><path d="M10 15.500h4V22h-4z" fill="#fbd91e" stroke="#b09410" /><path d="M14 9.500h3.500V22H14z" fill="#1aa24f" stroke="#116d36" /><path d="M17.500 16H21v6h-3.500z" fill="#d81e1e" stroke="#8c1010" /></g>,
  labpin: <g><Tag fill="#bcdcf8" stroke="#4d8bd0" text="ab" /><Pin /></g>,
  labred: <Tag fill="#fff0f0" stroke="#ff1a1a" text="abc" color="#ff1a1a" />,
  g1: <g opacity=".36"><Tag fill="#d9d6bf" stroke="#999" text="ab" /><Pin c="#8b6a6a" /></g>,
  g2: <g opacity=".38"><Tag fill="#d9d6bf" stroke="#999" text="abc" /><path d="M9 17.500c4-4.500 11-4.500 14.500 0-4 4.500-10.500 4.500-14.500 0z" fill="#fff" stroke="#666" /><circle cx="16.500" cy="17.300" r="2.500" fill="#666" /></g>,
  g3: <g opacity=".38"><Tag fill="#d9d6bf" stroke="#999" text="abc" /><path d="M13 12.500h11v10H13z" fill="#888" /><path d="M15 16h3.500v-2l4 3.500-4 3.500v-2H15z" fill="#fff" /></g>,
  g4: <g opacity=".38"><Tag fill="#d9d6bf" stroke="#999" text="abc" /><path d="M13 12.500h11v10H13z" fill="#888" /><path d="M18 20.500a3.200 3.200 0 1 0-2-5" fill="none" stroke="#fff" strokeWidth="1.800" /></g>,
  g5: <g opacity=".38"><Tag fill="#d9d6bf" stroke="#999" text="abc" /><path d="M13 12.500h11v10H13z" fill="#888" /><path d="M21.500 14.500l-6 6" stroke="#fff" strokeWidth="2" /></g>,
  metasearch: <g><circle cx="12" cy="10.500" r="10.800" fill="#8fb3dc" stroke="#1f3550" strokeWidth="1.300" /><path d="M2 10h20M4 5h16M12 0v14M7 1c-3 5-3 8-1 13M17 1c3 5 3 8 1 13" fill="none" stroke="#dbe8f5" strokeWidth=".8" /><path d="M3 5l6-3 3 4-5 3zM13 3l6 1 2 6-7-1zM3 11h5l2 4-5 1z" fill="#4d6f94" /><path d="M5 17l4-4h6l4 4v5H5z" fill="#111" /><g fill="#fff" stroke="#111" strokeWidth="1.500"><ellipse cx="7" cy="20.700" rx="4" ry="2.400" /><ellipse cx="17" cy="20.700" rx="4" ry="2.400" /></g></g>,
  python: <g><path d="M10 2h3c3 0 3.500 1.500 3.500 3v5c0 2-1 2.500-3 2.500H9c-2.500 0-3 1-3 4H4c-2.500 0-3-3-3-5s1-4.500 4-4.500h6.500V6H6V4.500C6 2.500 7.500 2 10 2z" fill="#3773a6" /><path d="M12 22H9c-3 0-3.500-1.500-3.500-3v-3c0-2 1-3 3-3H14c2.500 0 3-1.500 3-4.500h1.500c2.500 0 3 2.500 3 5s-1 4.500-4 4.500h-6V19H17c0 2.500-2.500 3-5 3z" fill="#fdd343" /><circle cx="8.500" cy="4.300" r=".9" fill="#fff" /><path d="M16.500 16.500l5 3-5 3" fill="none" stroke="#444" strokeWidth="1.300" /></g>,
  globe: <g><circle cx="12" cy="12" r="11" fill="#0b0d14" stroke="#1c2a8a" strokeWidth="1.600" /><circle cx="12" cy="12" r="9" fill="none" stroke="#3a4250" /><path d="M5 9c1-3 3-4 5-3 2 2 5 3 7 6 1 2 0 4-2 5C9 18 4 14 5 9z" fill="#2e68a8" /><path d="M6 10l3-1 3 3 3 1-1 3-4-1z" fill="#a3b184" /><path d="M11 6l4 1 3 5-4-1z" fill="#20324a" /></g>,
  help: <g><path d="M2 1.500h20v21H2z" fill="#6390c4" stroke="#2d3f54" /><path d="M2 1.500h5v21H2z" fill="#2d3b4b" /><text x="10.800" y="17" fontSize="16" fontFamily="Liberation Serif" fill="#fff">?</text></g>,
  grid: <g><path d="M1.500 1.500h21v20h-21z" fill="#fff" stroke="#3e8fc4" strokeWidth="1.600" /><path d="M2 4h20" stroke="#f6ce86" strokeWidth="2.500" /><path d="M2 9h20M2 13.500h20M2 18h20M7 5v16M12 5v16M17 5v16" stroke="#b9d6ea" /><path d="M9 14c1-5 6-7 9-5l1-2 4 6-7 1 1-2c-2-1-4 0-5 2zM23 16c-1 5-6 7-9 5l-2 2-2-7h7l-2 2c2 1 4 0 5-2z" fill="#8fce22" stroke="#4f8a10" strokeWidth=".8" /></g>,
  shape: <g transform="translate(1 0)" strokeLinejoin="round" stroke="#444" strokeWidth="1.200"><path d="M8 3l13-2.500c1.500 2 1.500 8-.5 12L8 15z" fill="#fff" /><path d="M8 3L4 5 1.500 14 8 15z" fill="#aaa" /><path d="M1.500 14L8 15l-1 6-3-2z" fill="#888" /><path d="M8 15l12.500-2.500L17 20l-10 1z" fill="#d5d5d5" /></g>,
};

function Icon({ n, on }) {
  return (
    <div className={"flex h-[32px] w-[33px] shrink-0 items-center justify-center rounded-[3px] " + (on ? "bg-[#dcdcdc] shadow-[inset_0_0_0_1px_#a9a9a9]" : "")}>
      <svg width="24" height="24" viewBox="0 0 24 24" fill="none">{ICONS[n]}</svg>
    </div>
  );
}

function Handle({ first }) {
  return (
    <div className={"flex h-full shrink-0 items-center " + (first ? "w-[12.5px] pl-[5px]" : "w-[16px] pl-[8px]")}>
      <svg width="5" height="17" viewBox="0 0 5 17"><path d="M.5 0v17M2.500 0v17M4.500 0v17" stroke="#b4b4b4" strokeDasharray="1 2" /></svg>
    </div>
  );
}

const Caret = ({ light }) => (
  <div className="flex w-[12px] shrink-0 justify-center pr-[2px]">
    <div className={"h-0 w-0 border-x-[4px] border-t-[4px] border-x-transparent " + (light ? "border-t-[#aaa]" : "border-t-[#4d4d4d]")} />
  </div>
);

function Toolbar({ items, className }) {
  return (
    <div className={"flex items-center border-b border-[#b4b4b4] bg-gradient-to-b from-[#fafafa] to-[#efefef] " + className}>
      {items.split(" ").map((it, i) => {
        if (it === "|") return <Handle key={i} first={i === 0} />;
        if (it === "v") return <Caret key={i} />;
        if (it === "w") return <Caret key={i} light />;
        if (it === "/") return <div key={i} className="flex w-[7px] shrink-0 justify-center"><div className="h-[19px] w-px bg-[#cfcfcf]" /></div>;
        return <Icon key={i} n={it} on={it === "hand"} />;
      })}
    </div>
  );
}

/* ---------- chrome ---------- */
const MENU = [
  ["Projet", 3, 31, "w-[45px]"], ["Éditer", 0, 30, "w-[44px]"], ["Vue", 1, 20, "w-[34px]"], ["Couche", 0, 41, "w-[55px]"], ["Préférences", 0, 61, "w-[75px]"],
  ["Extensions", 1, 55, "w-[68px]"], ["Vecteur", 0, 40, "w-[54px]"], ["Raster", 0, 32, "w-[46px]"], ["Base de données", 0, 88, "w-[102px]"], ["Internet", 0, 41, "w-[55px]"],
  ["Maillage", 0, 45, "w-[59px]"], ["MMQGIS", -1, 48, "w-[61px]"], ["Traitement", 0, 58, "w-[72px]"], ["Aide", 0, 24, "w-[40px]"],
];

const Check = () => (
  <div className="flex h-[13px] w-[13px] shrink-0 items-center justify-center border border-[#b0b0b0] bg-white">
    <svg width="11" height="11" viewBox="0 0 11 11" fill="none" stroke="#111" strokeWidth="2"><path d="M2 5.500l2.500 3L9 1.500" /></svg>
  </div>
);

const Spin = () => (
  <div className="flex h-full w-[14px] flex-col items-center justify-center gap-[5px] border-l border-[#b9b9b9] bg-[#f5f5f5]">
    <div className="h-0 w-0 border-x-[3.5px] border-b-[4px] border-x-transparent border-b-[#555]" />
    <div className="h-0 w-0 border-x-[3.5px] border-t-[4px] border-x-transparent border-t-[#555]" />
  </div>
);

const SIcon = ({ children, className }) => (
  <div className={"flex shrink-0 items-center " + className}><svg width="16" height="16" viewBox="0 0 16 16" fill="none">{children}</svg></div>
);

function LayersPanel() {
  return (
    <div className="flex w-[441px] shrink-0 flex-col">
      <div className="flex h-[21px] items-center pl-[4px] pr-[2px]">
        <T w={46}>Couches</T>
        <div className="ml-auto flex gap-[3px]">
          <svg width="11" height="11" viewBox="0 0 11 11" fill="none" stroke="#555"><rect x=".5" y=".5" width="10" height="10" rx="2" /><path d="M2.500 5h3.500v3.500H2.500zM4.500 5V2.500H8.500V6.500H6" /></svg>
          <svg width="11" height="11" viewBox="0 0 11 11" fill="none" stroke="#555"><rect x=".5" y=".5" width="10" height="10" rx="2" /><path d="M3 3l5 5M8 3l-5 5" strokeWidth="2" /></svg>
        </div>
      </div>
      <div className="flex h-[30px] items-center pb-[2px] pl-[8px]">
        <SIcon className="w-[25px]"><path d="M1 8l6-3 4 5-5 4z" fill="#f4b63a" stroke="#d65a2e" /><path d="M2 7l4-2 2 3-3 2z" fill="#ee6352" /><path d="M3 12l4-3 2 3-3 2z" fill="#7fb3e6" /><path d="M9 7l5.500-6" stroke="#c78a3e" strokeWidth="2.600" /></SIcon>
        <SIcon className="w-[26px]"><path d="M1.500 6h6v8h-6z M4 4h6v8H4z M6.500 2.500h6v8h-6z" fill="#f4f4f4" stroke="#777" /><path d="M9 13V1M7 4l2-3 2 3" stroke="#446b95" strokeWidth="1.200" /><path d="M9.500 9.500h6v6h-6z" fill="#4c9a61" /><path d="M12.500 10.500v4M10.500 12.500h4" stroke="#fff" strokeWidth="1.200" /></SIcon>
        <SIcon className="w-[25px]"><path d="M0 8c4-6 11-6 15 0-4 5-11 5-15 0z" fill="#fff" stroke="#777" /><circle cx="7.500" cy="7.500" r="3" fill="#4f81bd" /><circle cx="7.500" cy="7.500" r="1.200" fill="#223" /><path d="M1 3.500c4-2.500 9-2.500 13 0" stroke="#aaa" /><path d="M11 12.500h5L13.500 15z" fill="#444" /></SIcon>
        <SIcon className="w-[25px]"><path d="M.5 3.500h13L9 9v6.500H5V9z" fill="#5f8ec2" stroke="#47719f" /><path d="M.5 1h13v2.500H.5z" fill="#fbe54b" stroke="#c9a100" /></SIcon>
        <SIcon className="w-[19px]"><g fill="none" stroke="#8b4a88" strokeWidth="1.600"><path d="M7.300 3C5.500.3 1.500 1.200 2 3.500c.2 1.300 1.500 1.700 3.500 1.700C3 5.200 1.200 6 1.200 7.800c0 2.700 4.600 3 6.300.2" /></g><path d="M8 9.500h6V15h-2v-3h-2v3H8z" fill="#bbb" stroke="#888" strokeWidth=".7" /></SIcon>
        <Caret />
        <SIcon className="ml-[6px] w-[25px]"><path d="M1 1.500h6M1.500 1.500v11h4M1.500 6h4" stroke="#999" /><path d="M4 5h3v3H4zM4 10.500h3v3H4z" fill="#fbe3b8" stroke="#ee8a1c" /><path d="M9 1h3.500v8h2.700l-4.400 6-4.400-6H9z" fill="#5f8ec2" stroke="#43689a" strokeWidth=".8" /></SIcon>
        <SIcon className="w-[25px]"><path d="M1 1.500h6M1.500 1.500v11h4M1.500 6h4" stroke="#999" /><path d="M4 5h3v3H4zM4 10.500h3v3H4z" fill="#fbe3b8" stroke="#ee8a1c" /><path d="M9 14.500h3.500v-8h2.700L10.800.8 6.400 6.500H9z" fill="#5f8ec2" stroke="#43689a" strokeWidth=".8" /></SIcon>
        <SIcon className="w-[25px]"><path d="M.5 1.500h11.500v11H.5z" fill="#f0f0f0" stroke="#777" strokeWidth="1.200" /><rect x="8" y="9.500" width="7" height="6" rx="2" fill="#e5373d" /><path d="M9.500 12.500h4" stroke="#fff" strokeWidth="1.400" /></SIcon>
      </div>
      <div className="h-[777px] border border-[#b4b4b4] bg-white">
        <div className="flex h-[18px] items-center bg-[#efefef] pl-[23px]">
          <Check />
          <div className="ml-[7px] h-[16px] w-[16px] border border-[#56705a] bg-[#959f68]" />
          <T w={139} className="ml-[6px] font-bold underline">fr dpts 1871-1910 v1920</T>
          <div className="ml-auto mr-[1px] h-[16px] w-[3px] bg-[#dedede]" />
        </div>
      </div>
      <div className="mt-[1px] flex h-[26px] items-start border-t border-[#b4b4b4]">
        <div className="-mt-px flex h-[23px] w-[66px] items-center justify-center rounded-b-[3px] border border-t-0 border-[#b4b4b4] bg-[#f8f8f8] pr-[2px]"><T w={41}>Couches</T></div>
        <div className="flex h-[20px] w-[79px] items-center justify-center rounded-b-[3px] border border-l-0 border-t-0 border-[#b9b9b9] bg-[#dcdcdc] pr-[2px]"><T w={56}>Explorateur</T></div>
      </div>
    </div>
  );
}

const BOX = "flex h-[22px] shrink-0 items-center overflow-hidden rounded-[3px] border border-[#a9a9a9] bg-white ";

function StatusBar() {
  return (
    <div className="flex h-[26px] items-center pl-[4px]">
      <div className={BOX + "w-[241px] pl-[7px] text-[#7a7a7a]"}>
        <svg width="14" height="14" viewBox="0 0 14 14" fill="none" stroke="#8a8a8a" strokeWidth="1.300"><circle cx="5.500" cy="5.500" r="4" /><path d="M8.500 8.500L13 13" /></svg>
        <T w={134} className="ml-[6px]">Taper pour trouver (Ctrl+K)</T>
      </div>
      <T w={21} className="ml-[7px]">Prêt</T>
      <div className="flex w-[833px] shrink-0" />
      <T w={60}>Coordonnée</T>
      <div className={BOX + "ml-[3px] w-[103px] justify-center"}><T w={82}>731506,6728672</T></div>
      <SIcon className="ml-[5px] w-[28px]"><ellipse cx="8" cy="9.500" rx="3.600" ry="5.500" transform="rotate(-35 8 9.500)" fill="#e8e8e8" stroke="#333" strokeWidth="1.300" /><path d="M4 7l6-3M5.500 9.500l6-3M6 12l2-2M1 5l3-4M3 6l3-5M10 3l4-2" stroke="#333" strokeWidth="1.300" /></SIcon>
      <T w={33}>Échelle</T>
      <div className={BOX + "ml-[4px] w-[81px] pl-[3px]"}><T w={52}>1:5250728</T><div className="ml-auto flex h-full w-[20px] items-center justify-center border-l border-[#c5c5c5] bg-[#f5f5f5]"><div className="h-0 w-0 border-x-[4px] border-t-[5px] border-x-transparent border-t-[#555]" /></div></div>
      <SIcon className="ml-[10px] w-[22px]"><path d="M4 8V5c0-5 8-5 8 0v3" stroke="#888" strokeWidth="1.600" /><rect x="2.500" y="7" width="11" height="8" rx="1" fill="#555" /></SIcon>
      <T w={29}>Loupe</T>
      <div className={BOX + "ml-[4px] w-[87px] pl-[4px]"}><T w={28}>100%</T><div className="ml-auto h-full"><Spin /></div></div>
      <T w={41} className="ml-[9px]">Rotation</T>
      <div className={BOX + "ml-[10px] w-[84px] pl-[4px]"}><T w={24}>0,0 °</T><div className="ml-auto h-full"><Spin /></div></div>
      <div className="ml-[7px]"><Check /></div>
      <T w={31} className="ml-[5px]">Rendu</T>
      <SIcon className="ml-[17px] w-[19px]"><circle cx="8" cy="7.500" r="6.500" fill="#777" /><path d="M1.500 7.500h13M3 4h10M3 11h10M8 1v14M5 1.500c-2 4-2 8 0 12M11 1.500c2 4 2 8 0 12" stroke="#ddd" strokeWidth=".8" /></SIcon>
      <T w={67}>IGNF:LAMB93</T>
      <SIcon className="ml-[19px] w-[16px]"><path d="M8 1.500c4 0 7.500 2 7.500 5.500S12 12.500 11 12.500L12 16l-5-3.500C3 12.500.5 10 .5 7S4 1.500 8 1.500z" fill="#555" /><path d="M4 7h1.500M7.300 7h1.500M10.600 7h1.500" stroke="#fff" strokeWidth="1.500" /></SIcon>
    </div>
  );
}

export default function App() {
  return (
    <div className="flex h-[1040px] w-[1920px] flex-col overflow-hidden bg-[#efefef] font-['Open_Sans','Noto_Sans',sans-serif] text-[11.5px] leading-[16px] text-black">
      <div className="flex h-[23px] items-center bg-white pl-[2px]">
        <svg width="17" height="17" viewBox="0 0 17 17"><circle cx="8" cy="8" r="6" fill="none" stroke="#589632" strokeWidth="3.400" /><path d="M9 9l6.500 6.500" stroke="#93b023" strokeWidth="3.400" /><path d="M7 7h3v3z" fill="#ee7913" stroke="#ee7913" /></svg>
        <T w={123} className="ml-[4px]">*Projet sans titre - QGIS</T>
        <div className="ml-auto flex items-center gap-[35px] pr-[19px]">
          <svg width="11" height="11" viewBox="0 0 11 11"><path d="M0 5.500h10" stroke="#000" /></svg>
          <svg width="11" height="11" viewBox="0 0 11 11" fill="none" stroke="#000"><path d="M.5 2.500h7v7h-7zM2.500 2.500v-2h7v7h-2" /></svg>
          <svg width="11" height="11" viewBox="0 0 11 11"><path d="M.5.500l10 10M10.500.500l-10 10" stroke="#000" strokeWidth="1.100" /></svg>
        </div>
      </div>
      <div className="flex h-[20px] items-center border-b border-[#d2d2d2] pl-[10px]">
        {MENU.map(([s, u, w, cls]) => (
          <div key={s} className={"shrink-0 " + cls}>
            <T w={w}>{u < 0 ? s : <>{s.slice(0, u)}<span className="underline underline-offset-2">{s[u]}</span>{s.slice(u + 1)}</>}</T>
          </div>
        ))}
      </div>
      <Toolbar className="h-[39px]" items="| new open save layout manager style | hand pan zoomin zoomout full zoomsel zoomlay native last next newview bookmark bookmarks refresh | identify action w select v selval v deselect table abacus gear sigma measure v tip text v" />
      <Toolbar className="h-[39px]" items="| dsm geopkg vlayer feather memory / virtual | pencils pencil saveedit addpoly vertex w multi trash cut copy paste undo redo | label diagram / labpin labred / g1 g2 g3 g4 g5 | metasearch | python globe | help | grid" />
      <Toolbar className="h-[38px] pt-[1px]" items="| | shape" />
      <div className="flex h-[855px]">
        <LayersPanel />
        <div className="flex w-[6px] shrink-0 items-center justify-center"><div className="h-[16px] border-l border-dotted border-[#b5b5b5]" /></div>
        <div className="mt-[1px] h-[852px] w-[1473px] shrink-0 border border-[#b4b4b4] bg-white"><FranceMap /></div>
      </div>
      <StatusBar />
    </div>
  );
}
